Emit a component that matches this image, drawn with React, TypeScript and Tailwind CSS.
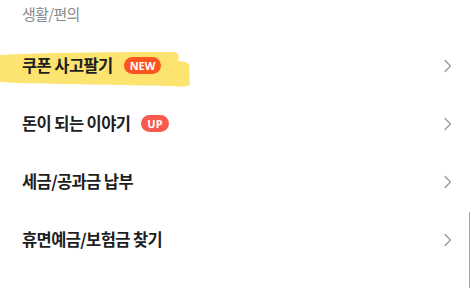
import React from "react";

const font = { fontFamily: '"Noto Sans CJK KR", "Noto Sans", sans-serif' };

function Chevron() {
  return (
    <svg width="10" height="14" viewBox="0 0 10 14" fill="none" className="shrink-0">
      <path d="M2 1.5 L7.5 7 L2 12.5" stroke="#9a9a9a" strokeWidth="1.3" strokeLinecap="round" strokeLinejoin="round" />
    </svg>
  );
}

function Row({ label, badge, badgeColor, highlight }: { label: string; badge?: string; badgeColor?: string; highlight?: boolean }) {
  return (
    <div className="relative flex h-[58px] items-center justify-between pl-[22px] pr-[17px]">
      {highlight && (
        <svg className="absolute left-0 top-[15px]" width="192" height="36" viewBox="0 0 192 36" fill="none">
          <path
            d="M0 3 C20 2 40 1 60 1 C100 0 140 0 172 0 C178 0 180 3 178 9 C182 9 186 10 189 12 C190 18 189 26 190 33 C186 35 180 35 170 34 C120 33 60 32 20 31 C10 31 4 30 0 30 Z"
            fill="#fde36f"
          />
        </svg>
      )}
      <div className="relative flex items-center gap-[11px]">
        <span className="text-[16.5px] font-semibold tracking-[-0.6px] text-[#1e1e1e]" style={font}>
          {label}
        </span>
        {badge && (
          <span
            className={`flex h-[17px] items-center rounded-full px-[6px] text-[11px] font-bold leading-none text-white ${badgeColor}`}
            style={{ fontFamily: '"Noto Sans", sans-serif' }}
          >
            {badge}
          </span>
        )}
      </div>
      <Chevron />
    </div>
  );
}

export default function App() {
  return (
    <div className="relative h-[288px] w-[470px] overflow-hidden bg-white" style={font}>
      <div className="pl-[22px] pt-[3px] text-[15px] tracking-[-0.7px] text-[#8a8a8a]">생활/편의</div>
      <div className="mt-[11px] flex flex-col">
        <Row label="쿠폰 사고팔기" badge="NEW" badgeColor="bg-[#fc5520]" highlight />
        <Row label="돈이 되는 이야기" badge="UP" badgeColor="bg-[#f85a4f]" />
        <Row label="세금/공과금 납부" />
        <Row label="휴면예금/보험금 찾기" />
      </div>
      <div className="absolute right-0 top-[212px] h-[76px] w-[1px] bg-[#a8a8a8]" />
    </div>
  );
}
